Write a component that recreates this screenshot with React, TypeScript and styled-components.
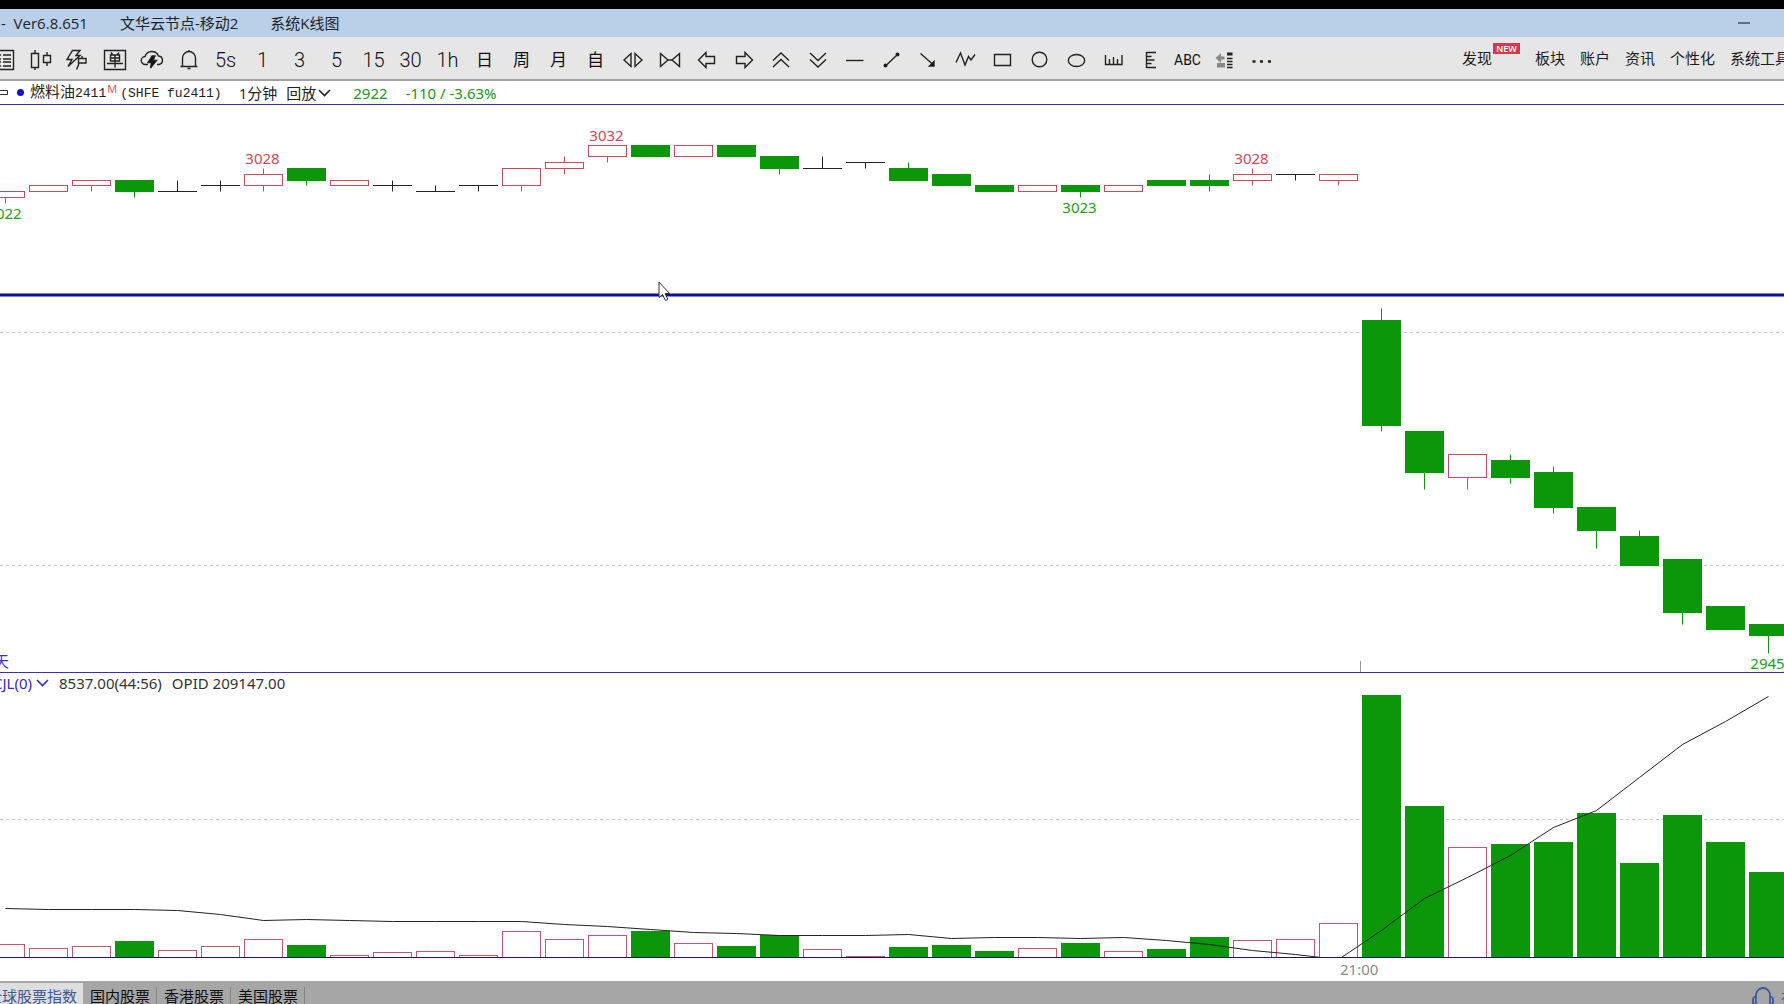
import React from "react";
import styled, { createGlobalStyle } from "styled-components";

const UI = `"Open Sans", "Noto Sans CJK SC", sans-serif`;
const FIGURES = `"Noto Sans", "Noto Sans CJK SC", sans-serif`;
const NAVY = "#3a30b0";
const GREEN = "#0c960a";
const RED = "#d0485c";

/* The window frame reaches past both sides of the screen by this much. */
const BLEED = 24;

const GlobalStyle = createGlobalStyle`
  * { box-sizing: border-box; }
  body { margin: 0; background: #000; overflow: hidden; font-family: ${UI}; }
  button, select { font: inherit; color: inherit; background: none; border: 0; padding: 0; margin: 0; }
`;

const Shell = styled.div`
  display: flex;
  flex-direction: column;
  height: 100vh;
  margin: 0 -${BLEED}px;
  padding-top: 9px;
  background: #000;
`;

const TitleBar = styled.header`
  display: flex;
  align-items: center;
  justify-content: space-between;
  flex: none;
  height: 28px;
  padding: 0 52px 0 25px;
  background: #bad0e8;
  color: #1c242c;
  font-size: 15px;
  line-height: 20px;
`;

const TitleTexts = styled.div`
  display: flex;
  gap: 32px;
  white-space: pre;
`;

const MinimizeButton = styled.button`
  display: flex;
  align-items: center;
  justify-content: center;
  width: 24px;
  height: 24px;
`;

const Toolbar = styled.div`
  display: flex;
  align-items: center;
  justify-content: space-between;
  flex: none;
  height: 44px;
  padding: 0 18px 0 9px;
  background: #e6e6e6;
  border-bottom: 2px solid #a2a2a2;
`;

const ToolList = styled.div`
  display: flex;
  padding-top: 4px;
`;

const ToolButton = styled.button<{ $light?: boolean; $size: number }>`
  display: flex;
  align-items: center;
  justify-content: center;
  width: 37px;
  height: 32px;
  color: #111;
  font-family: Roboto, "Noto Sans CJK SC", sans-serif;
  font-size: ${(p) => p.$size}px;
  font-weight: ${(p) => (p.$light ? 300 : 400)};
  line-height: 24px;
  white-space: nowrap;
`;

const Menu = styled.nav`
  display: flex;
  gap: 15px;
  font-size: 15px;
  line-height: 20px;
  color: #1c1c1c;
`;

const MenuItem = styled.a`
  display: flex;
  color: inherit;
  text-decoration: none;
  white-space: nowrap;
`;

const NewBadge = styled.span`
  align-self: flex-start;
  width: 27px;
  height: 11px;
  margin: -5px 0 0 1px;
  background: #d8384a;
  color: #fff;
  font-size: 9px;
  font-weight: 600;
  line-height: 11px;
  text-align: center;
`;

const InfoRow = styled.div`
  display: flex;
  align-items: center;
  flex: none;
  height: 24px;
  padding-left: 24px;
  background: #fff;
  border-bottom: 1px solid ${NAVY};
  color: #222;
  font-size: 15px;
  line-height: 20px;
  white-space: pre;
`;

const Dot = styled.span`
  width: 7px;
  height: 7px;
  margin: 0 6px 0 9px;
  border-radius: 50%;
  background: #1010c8;
`;

const Contract = styled.h1`
  display: flex;
  align-items: baseline;
  margin: 0;
  font-size: 15px;
  font-weight: 400;
`;

const Mono = styled.span`
  font-family: "Liberation Mono", monospace;
  font-size: 13px;
`;

const MainMark = styled.sup`
  align-self: flex-start;
  width: 14px;
  padding-left: 1px;
  color: #d84a5c;
  font-size: 11px;
  line-height: 16px;
`;

const Period = styled.span`
  margin: 0 9px 0 17px;
`;

const Picker = styled.label<{ $color: string; $gap: number }>`
  display: flex;
  align-items: center;
  gap: ${(p) => p.$gap}px;
  color: ${(p) => p.$color};

  select {
    appearance: none;
    outline: 0;
  }
`;

const Quote = styled.span`
  margin-left: 22px;
  color: #1a961a;
  font-family: ${FIGURES};

  & + & {
    margin-left: 18px;
  }
`;

const PricePane = styled.section`
  position: relative;
  flex: 1;
  min-height: 0;
  background: #fff;
  border-bottom: 1px solid ${NAVY};
`;

const VolumePane = styled.section`
  display: flex;
  flex-direction: column;
  flex: none;
  background: #fff;
`;

const VolumeHeader = styled.div`
  display: flex;
  align-items: center;
  gap: 10px;
  height: 20px;
  padding-left: 17px;
  color: #333;
  font-family: ${FIGURES};
  font-size: 15px;
  line-height: 20px;
`;

const Plot = styled.svg<{ $height: string }>`
  display: block;
  width: 100%;
  height: ${(p) => p.$height};
  overflow: hidden;

  text {
    font-family: ${FIGURES};
    font-size: 15px;
  }
`;

const TimeAxis = styled.div`
  height: 24px;
  padding-left: 1364px;
  border-top: 1px solid #1c1464;
  color: #8a8a8a;
  font-family: ${FIGURES};
  font-size: 15px;
  line-height: 23px;
`;

const Pointer = styled.svg`
  position: absolute;
  left: 682px;
  top: 176px;
`;

const BottomBar = styled.footer`
  display: flex;
  justify-content: space-between;
  flex: none;
  height: 23px;
  background: #a6a6a6;
  font-size: 15px;
  overflow: hidden;
`;

const Tabs = styled.div`
  display: flex;
  padding-left: 4px;
`;

const Tab = styled.button<{ $active?: boolean }>`
  flex: none;
  height: 28px;
  margin-top: 2px;
  padding: 0 6px 2px 7px;
  background: ${(p) => (p.$active ? "#dedede" : "transparent")};
  color: ${(p) => (p.$active ? "#3c5a96" : "#101010")};
  line-height: 26px;
  white-space: nowrap;
`;

const Divider = styled.i`
  width: 1px;
  height: 20px;
  margin-top: 6px;
  background: #858585;
`;

const Support = styled.a`
  display: flex;
  gap: 6px;
  width: 57px;
  padding-top: 5px;
  color: #3c5aa0;
  line-height: 22px;
  text-decoration: none;
  white-space: nowrap;

  svg {
    flex: none;
  }
`;

/* ---------- toolbar icons ---------- */

const Icon = ({ children }: { children: React.ReactNode }) => (
  <svg width="24" height="24" viewBox="0 0 24 24" fill="none" stroke="#222" strokeWidth="1.4">
    {children}
  </svg>
);

type Tool = { name: string; text?: string; size?: number; icon?: React.ReactNode };

const tools: Tool[] = [
  { name: "报价", icon: <><path d="M2 2.500H21.500V21.500H2z" /><path d="M5 7h4M11 7h8M5 11h4M11 11h8M5 14h4M11 14h8M5 18h4M11 18h8" /></> },
  { name: "K线", icon: <><path d="M2.500 5.500h7v14h-7zM6 2v3.500M6 19.500V22" /><path d="M14.500 7.500h7v7h-7zM18 4v3.500M18 14.500V18" /></> },
  { name: "闪电下单", icon: <><path d="M6.500 2.500H14L10 7.500H14L2 18.500L6 11.500H1z" /><path d="M10.500 21.500L12.500 17V10.500H20V15H12.500M16 10.500V8" /></> },
  { name: "下单", icon: <><path d="M1.500 2.500h21v19h-21z" /><path d="M8 4.500l1.500 2M16 4.500l-1.500 2M7.500 7h9v6h-9zM7.500 10h9M12 7v12.500M4 15.500h16" /></> },
  { name: "云", icon: <><path d="M8 16.500H5.500a4 4 0 0 1-.5-8a7.200 7.200 0 0 1 13.500-.5a4.300 4.300 0 0 1 .5 8.500H17" /><path d="M12 8L8 14.500h3.500L10.500 20L16.500 12.500H13L15 8z" fill="#111" /></> },
  { name: "预警", icon: <path d="M3.500 18.500h17M5.500 18V10a6.500 6.500 0 0 1 13 0v8M12 2v2M10.500 20.500h3" /> },
  { name: "5秒", text: "5s", size: 20 },
  { name: "1分钟", text: "1", size: 20 },
  { name: "3分钟", text: "3", size: 20 },
  { name: "5分钟", text: "5", size: 20 },
  { name: "15分钟", text: "15", size: 20 },
  { name: "30分钟", text: "30", size: 20 },
  { name: "1小时", text: "1h", size: 20 },
  { name: "日线", text: "日" },
  { name: "周线", text: "周" },
  { name: "月线", text: "月" },
  { name: "自定义", text: "自" },
  { name: "放宽", icon: <path d="M10 5.500V18.500L3 12zM14 5.500V18.500L21 12z" /> },
  { name: "缩窄", icon: <path d="M2.500 5.500V18.500L10 12zM21.500 5.500V18.500L14 12zM10 12h4" /> },
  { name: "左移", icon: <path d="M3.500 12L11 4.500V8.500H19.500V15.500H11V19.500z" /> },
  { name: "右移", icon: <path d="M20.500 12L13 4.500V8.500H4.500V15.500H13V19.500z" /> },
  { name: "上翻", icon: <path d="M4 12.500L12 5L20 12.500M4 19L12 11.500L20 19" /> },
  { name: "下翻", icon: <path d="M4 5L12 12.500L20 5M4 11.500L12 19L20 11.500" /> },
  { name: "水平线", icon: <path d="M3 12.500H20.500" /> },
  { name: "线段", icon: <><path d="M6 17.500L17.500 6.500" /><circle cx="5.500" cy="17.500" r="1.300" fill="#111" /><circle cx="17.500" cy="6.500" r="1.300" fill="#111" /></> },
  { name: "箭头", icon: <><path d="M3.500 5.500L16 16.500" /><path d="M17 13.500V18H12.500z" fill="#111" /></> },
  { name: "波浪线", icon: <path d="M2 14.500L6.500 5L11 17L14.500 8.500L17 12L21 6.500" /> },
  { name: "矩形", icon: <path d="M3.500 6.500h16v11h-16z" /> },
  { name: "圆", icon: <circle cx="11.500" cy="11.500" r="7.300" /> },
  { name: "椭圆", icon: <ellipse cx="11.500" cy="12.500" rx="8.200" ry="6" /> },
  { name: "标尺", icon: <path d="M3.500 7v9.500h16.500V7M7.500 11v5M11.500 9v7M15.500 11v5" /> },
  { name: "黄金分割", icon: <path d="M17 4.500H7.500V19.500H17M7.500 8.500h5M7.500 12h8M7.500 15.500h5" /> },
  { name: "文字", text: "ABC", size: 14 },
  { name: "列表", icon: <><path d="M2.500 10L8 5v3.500h3.500v3H8V15z" fill="#888" stroke="none" /><path d="M4 15h8v4.500H4z" fill="#888" stroke="none" /><path d="M14 6h5.500" strokeWidth="3" /><path d="M14 10.500h5.500M14 13.500h5.500M14 16.500h5.500M14 19.500h5.500" /></> },
  { name: "更多", icon: <path d="M2.500 13.500h3M10 13.500h3M18 13.500h3" strokeWidth="2.600" /> },
];

const Chevron = () => (
  <svg width="13" height="8" viewBox="0 0 13 8" fill="none" stroke="currentColor" strokeWidth="1.6">
    <path d="M1 1L6.500 6.500L12 1" />
  </svg>
);

/* ---------- chart data ---------- */

/* open, close, high, low, volume height, open interest level */
type Bar = [number, number, number, number, number, number];

const bars: Bar[] = [
  [3023, 3024, 3024, 3022, 13, 49], [3024, 3025, 3025, 3024, 9, 48], [3025, 3026, 3026, 3024, 11, 48],
  [3026, 3024, 3026, 3023, 16, 48], [3024, 3024, 3026, 3024, 7, 47], [3025, 3025, 3026, 3024, 11, 43],
  [3025, 3027, 3028, 3024, 18, 37], [3028, 3026, 3028, 3025, 12, 38], [3025, 3026, 3026, 3025, 2, 37],
  [3025, 3025, 3026, 3024, 5, 36], [3024, 3024, 3025, 3024, 6, 36], [3025, 3025, 3025, 3024, 2, 36],
  [3025, 3028, 3028, 3024, 26, 36], [3028, 3029, 3030, 3027, 18, 33], [3030, 3032, 3032, 3029, 22, 31],
  [3032, 3030, 3032, 3030, 26, 28], [3030, 3032, 3032, 3030, 14, 25], [3032, 3030, 3032, 3030, 11, 24],
  [3030, 3028, 3030, 3027, 22, 22], [3028, 3028, 3030, 3028, 8, 22], [3029, 3029, 3029, 3028, 1, 22],
  [3028, 3026, 3029, 3026, 10, 23], [3027, 3025, 3027, 3025, 12, 19], [3025, 3024, 3025, 3024, 6, 20],
  [3024, 3025, 3025, 3024, 9, 20], [3025, 3024, 3025, 3023, 14, 19], [3024, 3025, 3025, 3024, 6, 20],
  [3026, 3025, 3026, 3025, 8, 17], [3026, 3025, 3027, 3024, 20, 13], [3026, 3027, 3028, 3025, 17, 7],
  [3027, 3027, 3027, 3026, 18, 3], [3026, 3027, 3027, 3025, 34, -2], [3002, 2984, 3004, 2983, 262, 27],
  [2983, 2976, 2983, 2973, 151, 59], [2975, 2979, 2979, 2973, 110, 80], [2978, 2975, 2979, 2974, 113, 102],
  [2976, 2970, 2977, 2969, 115, 130], [2970, 2966, 2970, 2963, 144, 147], [2965, 2960, 2966, 2960, 94, 180],
  [2961, 2952, 2961, 2950, 142, 213], [2953, 2949, 2953, 2949, 115, 236], [2950, 2948, 2950, 2945, 85, 261],
];

const PITCH = 43;
const BODY = 39;
const VOLUME_HEIGHT = 264;
const SESSION_X = 1360.5 + BLEED;

const centerX = (i: number) => BLEED + 5.5 + i * PITCH;
const priceY = (p: number) => Math.round(97.95 - (p - 3022) * 5.841) + 0.5;

const kind = ([open, close]: Bar) => (close > open ? "up" : close < open ? "down" : "flat");

const Candle = ({ bar, index }: { bar: Bar; index: number }) => {
  const [open, close, high, low] = bar;
  const k = kind(bar);
  const x = centerX(index);
  const top = priceY(Math.max(open, close));
  const bottom = priceY(Math.min(open, close));
  const color = k === "up" ? RED : k === "down" ? GREEN : "#222";
  return (
    <g stroke={color} fill={k === "down" ? GREEN : "#fff"}>
      <path d={`M${x} ${priceY(high)}V${top}M${x} ${bottom}V${priceY(low)}`} />
      {k === "flat" ? (
        <path d={`M${x - BODY / 2} ${top}h${BODY}`} />
      ) : (
        <rect x={x - 19} y={top} width={BODY - 1} height={bottom - top} />
      )}
    </g>
  );
};

const marks = [
  { index: 0, price: 3022, low: true },
  { index: 6, price: 3028 },
  { index: 14, price: 3032 },
  { index: 25, price: 3023, low: true },
  { index: 29, price: 3028 },
  { index: 41, price: 2945, low: true },
];

const GridLine = ({ y }: { y: number }) => (
  <line x1="0" x2="100%" y1={y} y2={y} stroke="#c4c4c4" strokeDasharray="3 3" />
);

const PriceChart = () => (
  <Plot $height="100%" role="img" aria-label="1分钟K线">
    <GridLine y={227.5} />
    <GridLine y={460.5} />
    {bars.map((bar, i) => (
      <Candle key={i} bar={bar} index={i} />
    ))}
    {marks.map((m) => (
      <text
        key={m.index}
        x={centerX(m.index) - 1}
        y={priceY(m.price) + (m.low ? 15 : -5)}
        textAnchor="middle"
        fill={m.low ? "#22a022" : RED}
      >
        {m.price}
      </text>
    ))}
    <line x1="0" x2="100%" y1="190" y2="190" stroke="#0a0aa4" strokeWidth="3" />
    <line x1={SESSION_X} x2={SESSION_X} y1="556" y2="567" stroke="#999" />
    <text x={BLEED - 6} y="562" fill="#4030c8">天</text>
  </Plot>
);

const VolumeChart = () => (
  <Plot $height={`${VOLUME_HEIGHT}px`} role="img" aria-label="成交量与持仓量">
    <GridLine y={126.5} />
    {bars.map((bar, i) => {
      const down = kind(bar) === "down";
      return (
        <rect
          key={i}
          x={centerX(i) - 19}
          y={VOLUME_HEIGHT - bar[4] + 0.5}
          width={BODY - 1}
          height={bar[4] + 2}
          fill={down ? GREEN : "#fff"}
          stroke={down ? GREEN : "#c8566a"}
        />
      );
    })}
    <polyline
      points={bars.map((bar, i) => `${centerX(i)},${VOLUME_HEIGHT - bar[5] + 0.5}`).join(" ")}
      fill="none"
      stroke="#222"
    />
  </Plot>
);

export default function App() {
  return (
    <>
      <GlobalStyle />
      <Shell>
        <TitleBar>
          <TitleTexts>
            <span>-  Ver6.8.651</span>
            <span>文华云节点-移动2</span>
            <span>系统K线图</span>
          </TitleTexts>
          <MinimizeButton aria-label="最小化">
            <svg width="12" height="2"><path d="M0 1h12" stroke="#111" /></svg>
          </MinimizeButton>
        </TitleBar>

        <Toolbar>
          <ToolList>
            {tools.map((t) => (
              <ToolButton key={t.name} aria-label={t.name} $size={t.size ?? 17} $light={t.size === 20}>
                {t.text ?? <Icon>{t.icon}</Icon>}
              </ToolButton>
            ))}
          </ToolList>
          <Menu>
            <MenuItem href="#discover">发现<NewBadge>NEW</NewBadge></MenuItem>
            <MenuItem href="#sector">板块</MenuItem>
            <MenuItem href="#account">账户</MenuItem>
            <MenuItem href="#news">资讯</MenuItem>
            <MenuItem href="#custom">个性化</MenuItem>
            <MenuItem href="#tools">系统工具</MenuItem>
          </Menu>
        </Toolbar>

        <InfoRow>
          <svg width="8" height="6" fill="none" stroke="#333"><path d="M0 .5h7.500v4H0" /></svg>
          <Dot />
          <Contract>
            <span>燃料油</span>
            <Mono>2411</Mono>
            <MainMark>M</MainMark>
            <Mono>(SHFE fu2411)</Mono>
          </Contract>
          <Period>1分钟</Period>
          <Picker $color="#222" $gap={1}>
            <select aria-label="模式"><option>回放</option></select>
            <Chevron />
          </Picker>
          <Quote>2922</Quote>
          <Quote>-110 / -3.63%</Quote>
        </InfoRow>

        <PricePane>
          <PriceChart />
          <Pointer width="14" height="21" viewBox="0 0 14 21" fill="#fff" stroke="#333">
            <path d="M1 1V16.500L4.500 13.500L7.500 19.500L9.800 18.500L7.200 12.500H11.500z" />
          </Pointer>
        </PricePane>

        <VolumePane>
          <VolumeHeader>
            <Picker $color="#3428c8" $gap={3}>
              <select aria-label="指标"><option>CJL(0)</option></select>
              <Chevron />
            </Picker>
            <span>8537.00(44:56)</span>
            <span>OPID 209147.00</span>
          </VolumeHeader>
          <VolumeChart />
          <TimeAxis>21:00</TimeAxis>
        </VolumePane>

        <BottomBar>
          <Tabs>
            <Tab $active>全球股票指数</Tab>
            <Tab>国内股票</Tab>
            <Divider />
            <Tab>香港股票</Tab>
            <Divider />
            <Tab>美国股票</Tab>
            <Divider />
          </Tabs>
          <Support href="#support">
            <svg width="24" height="24" viewBox="0 0 24 24" fill="none" stroke="currentColor" strokeWidth="1.8">
              <path d="M5 13V9a7 7 0 0 1 14 0v4M5 10a4 4 0 0 0-3 4v4h3zM19 10a4 4 0 0 1 3 4v4h-3z" />
            </svg>
            在线客服
          </Support>
        </BottomBar>
      </Shell>
    </>
  );
}
